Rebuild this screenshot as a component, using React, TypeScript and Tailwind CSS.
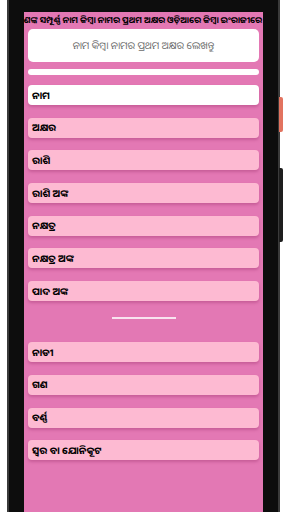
const odia = { fontFamily: '"Noto Sans Oriya", "Noto Sans", "DejaVu Sans", sans-serif' };

const firstGroup = ['ଅକ୍ଷର', 'ରାଶି', 'ରାଶି ଅଙ୍କ', 'ନକ୍ଷତ୍ର', 'ନକ୍ଷତ୍ର ଅଙ୍କ', 'ପାଦ ଅଙ୍କ'];
const secondGroup = ['ନାଡୀ', 'ଗଣ', 'ବର୍ଣ୍ଣ', 'ସ୍ୱର ବା ଯୋନିକୂଟ'];

function Item({ label, active = false }: { label: string; active?: boolean }) {
  return (
    <div
      className={`flex h-[20px] items-center rounded-[4px] px-1 text-[10px] font-bold text-black shadow-[0_2px_3px_rgba(150,40,100,0.35)] ${
        active ? 'bg-white' : 'bg-[#fdbad2]'
      }`}
    >
      {label}
    </div>
  );
}

export default function App() {
  return (
    <div className="relative h-[512px] w-[288px] overflow-hidden bg-white" style={odia}>
      <div className="ml-[7px] mt-[-40px] h-[580px] w-[273px] rounded-[30px] border-x-2 border-[#3a3a3a] bg-[#0d0d0d] pl-[15px] pr-[15px] pt-[52px]">
        <div className="h-full w-[239px] overflow-hidden bg-[#e378b4]">
          <div className="flex h-[17px] justify-end overflow-visible whitespace-nowrap pr-[1px] pt-[1px] text-[8.7px] font-bold leading-[15px] text-black">
            <span>ଆପଣଙ୍କ ସମ୍ପୂର୍ଣ୍ଣ ନାମ କିମ୍ବା ନାମର ପ୍ରଥମ ଅକ୍ଷର ଓଡ଼ିଆରେ କିମ୍ବା ଇଂରାଜୀରେ</span>
          </div>
          <div className="px-1">
            <div className="flex h-[33px] items-center justify-center rounded-[5px] bg-white text-[10px] text-[#6b6b6b]">
              ନାମ କିମ୍ବା ନାମର ପ୍ରଥମ ଅକ୍ଷର ଲେଖନ୍ତୁ
            </div>
            <div className="mt-[7px] h-[6px] rounded-[3px] bg-white" />
            <div className="mt-[10px] flex flex-col gap-[12.7px]">
              <Item label="ନାମ" active />
              {firstGroup.map((l) => (
                <Item key={l} label={l} />
              ))}
            </div>
            <div className="mt-[16px] flex justify-center">
              <div className="h-[2px] w-[64px] bg-[#f8e3ef]" />
            </div>
            <div className="mt-[23px] flex flex-col gap-[12.7px]">
              {secondGroup.map((l) => (
                <Item key={l} label={l} />
              ))}
            </div>
          </div>
        </div>
      </div>
      {/* side buttons */}
      <div className="absolute left-[279px] top-[97px] h-[35px] w-[4px] rounded-r-[2px] bg-[#e2735f]" />
      <div className="absolute left-[279px] top-[168px] h-[74px] w-[4px] rounded-r-[2px] bg-[#1e1e1e]" />
    </div>
  );
}
